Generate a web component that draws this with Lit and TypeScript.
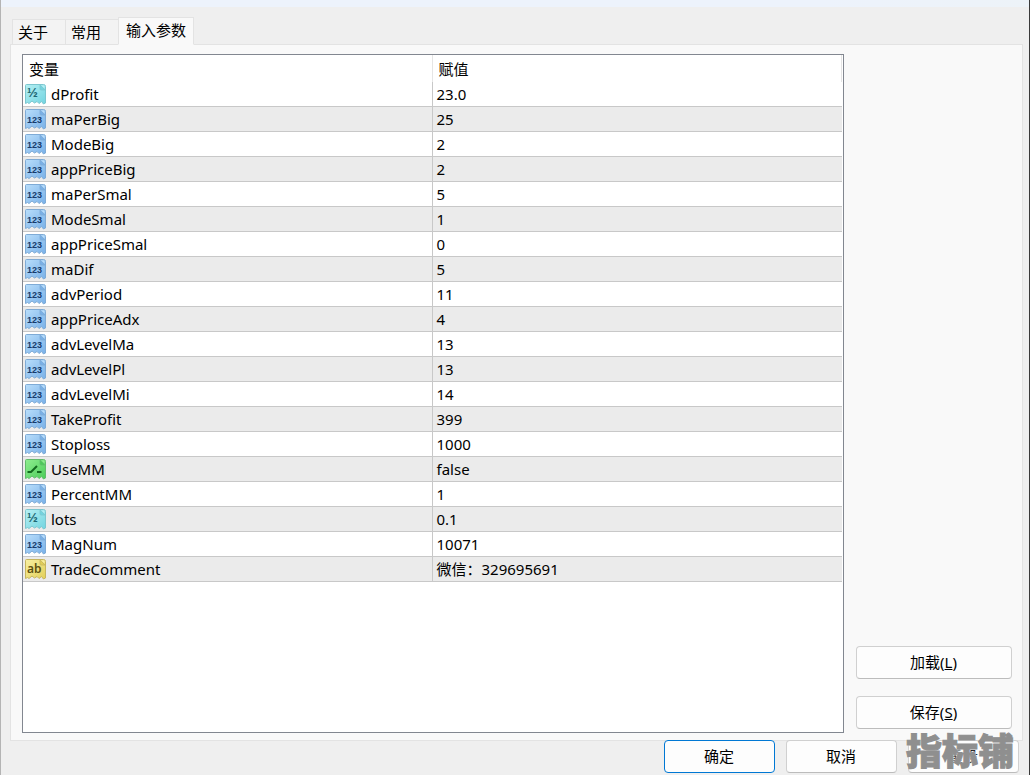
import { LitElement, html, css, svg } from "lit";
import { customElement, property, state } from "lit/decorators.js";

type Kind = "int" | "double" | "bool" | "string";

interface Param {
  kind: Kind;
  name: string;
  value: string;
}

const PARAMS: Param[] = [
  { kind: "double", name: "dProfit", value: "23.0" },
  { kind: "int", name: "maPerBig", value: "25" },
  { kind: "int", name: "ModeBig", value: "2" },
  { kind: "int", name: "appPriceBig", value: "2" },
  { kind: "int", name: "maPerSmal", value: "5" },
  { kind: "int", name: "ModeSmal", value: "1" },
  { kind: "int", name: "appPriceSmal", value: "0" },
  { kind: "int", name: "maDif", value: "5" },
  { kind: "int", name: "advPeriod", value: "11" },
  { kind: "int", name: "appPriceAdx", value: "4" },
  { kind: "int", name: "advLevelMa", value: "13" },
  { kind: "int", name: "advLevelPl", value: "13" },
  { kind: "int", name: "advLevelMi", value: "14" },
  { kind: "int", name: "TakeProfit", value: "399" },
  { kind: "int", name: "Stoploss", value: "1000" },
  { kind: "bool", name: "UseMM", value: "false" },
  { kind: "int", name: "PercentMM", value: "1" },
  { kind: "double", name: "lots", value: "0.1" },
  { kind: "int", name: "MagNum", value: "10071" },
  { kind: "string", name: "TradeComment", value: "微信：329695691" },
];

const PALETTE: Record<Kind, { light: string; dark: string; edge: string; ink: string }> = {
  int: { light: "#b9defb", dark: "#78b0e8", edge: "#7fabd6", ink: "#173c6c" },
  double: { light: "#b6f0f3", dark: "#72d4e0", edge: "#7cc6cf", ink: "#1f6874" },
  bool: { light: "#8fee90", dark: "#4acc58", edge: "#62bb6c", ink: "#126a1e" },
  string: { light: "#f8f0a2", dark: "#e2cf58", edge: "#c6b55e", ink: "#5c5010" },
};

@customElement("type-icon")
export class TypeIcon extends LitElement {
  static styles = css`
    :host { display: block; width: 21px; height: 21px; flex: none; }
    svg { display: block; }
    .word { font: 600 12px "Noto Sans", sans-serif; }
    .fraction { font: 600 13px "Liberation Sans", sans-serif; }
    .digits { font: 700 9px "Liberation Sans", sans-serif; }
  `;

  @property() kind: Kind = "int";

  private glyph(ink: string) {
    switch (this.kind) {
      case "double":
        return svg`<text class="fraction" x="2" y="13" fill=${ink}>½</text>`;
      case "bool":
        return svg`
          <path d="M2.500 13H6L12 7" fill="none" stroke=${ink} stroke-width="2" />
          <path d="M12 13H16.500" fill="none" stroke=${ink} stroke-width="2" />`;
      case "string":
        return svg`<text class="word" x="2" y="14" fill=${ink}>ab</text>`;
      default:
        return svg`<text class="digits" x="2" y="14" fill=${ink}>123</text>`;
    }
  }

  render() {
    const p = PALETTE[this.kind];
    return html`<svg width="21" height="21" viewBox="0 0 21 21" aria-hidden="true">
      <defs>
        <linearGradient id="g" x1="0" y1="0" x2="1" y2="1">
          <stop offset="0" stop-color=${p.light} />
          <stop offset="1" stop-color=${p.dark} />
        </linearGradient>
      </defs>
      <path
        d="M1.500.5H18.500Q20.500.5 20.500 2.500V19L18.500 20 16.500 17.500 14 19.500 12 17.500 9.500 19 7 17 4 19.500 2.500 18.500.5 19.500V1.500Q.5.5 1.500.5Z"
        fill="url(#g)" stroke=${p.edge} />
      <path d="M15 1V5Q15 6 16 6H20Z" fill=${p.dark} stroke=${p.edge} stroke-width=".8" />
      <path d="M16.500 1.500H19.500V4.500Z" fill=${p.light} />
      ${this.glyph(p.ink)}
    </svg>`;
  }
}

@customElement("app-root")
export class AppRoot extends LitElement {
  static styles = css`
    :host {
      display: block;
      font-family: "Noto Sans", "Noto Sans CJK SC", sans-serif;
      font-size: 15px;
      line-height: 20px;
      color: #000;
    }
    * { box-sizing: border-box; }
    button { font: inherit; color: inherit; }
    .dialog {
      display: flex;
      flex-direction: column;
      min-height: 100vh;
      background: #efefef;
      border-left: 1px solid #b4b4b4;
      border-right: 1px solid #3a3a3a;
    }
    .strip { height: 7px; background: linear-gradient(90deg, #edf3fc, #edf3fc 80%, #edf3f8); }
    .tabs {
      display: flex;
      align-items: flex-end;
      height: 38px;
      margin: 0 0 -1px 11px;
    }
    .tab {
      height: 26px;
      padding: 0 17px 0 5px;
      margin-right: -1px;
      background: #f3f3f3;
      border: 1px solid #e3e3e3;
      white-space: nowrap;
      text-align: left;
    }
    .tab.active {
      height: 28px;
      padding: 0 7px 2px;
      background: #f9f9f9;
      border-bottom-color: #f9f9f9;
      z-index: 1;
    }
    .panel {
      flex: 1;
      display: flex;
      gap: 12px;
      margin: 0 6px 0 9px;
      padding: 9px 10px 7px 11px;
      background: #f9f9f9;
      border: 1px solid #e3e3e3;
    }
    .list {
      flex: 1;
      padding-right: 1px;
      background: #fff;
      border: 1px solid #828790;
    }
    table { width: 100%; table-layout: fixed; border-collapse: separate; border-spacing: 0; }
    th, td { padding: 0; height: 25px; text-align: left; font-weight: normal; white-space: nowrap; }
    th { height: 27px; padding: 0 6px; border-right: 1px solid #e5e5e5; }
    td { border-bottom: 1px solid #c8c8c8; padding: 0 0 0 4px; }
    td:first-child { border-right: 1px solid #c8c8c8; padding: 0 0 0 2px; }
    tbody tr:nth-child(even) { background: #ebebeb; }
    .name { display: flex; align-items: center; gap: 5px; height: 24px; }
    .side {
      width: 156px;
      display: flex;
      flex-direction: column;
      justify-content: flex-end;
      gap: 17px;
      padding-bottom: 4px;
    }
    .btn {
      height: 33px;
      padding: 0 1px 2px 0;
      background: #fdfdfd;
      border: 1px solid #d0d0d0;
      border-bottom-color: #bcbcbc;
      border-radius: 4px;
    }
    .btn.primary { border-color: #0078d4; }
    .actions {
      position: relative;
      display: flex;
      justify-content: flex-end;
      gap: 11px;
      margin-top: -1px;
      padding: 0 10px 2px;
    }
    .actions .btn { width: 111px; }
    .mark {
      position: absolute;
      right: 15px;
      bottom: 6px;
      font: 900 36px/40px "Noto Sans CJK SC", sans-serif;
      color: #8f8f8f;
      -webkit-text-stroke: 1px #8f8f8f;
      text-shadow: 0 0 2px #fff, 0 0 2px #fff;
      pointer-events: none;
    }
  `;

  @state() private tab = 2;

  render() {
    return html`<main class="dialog">
      <div class="strip"></div>
      <div class="tabs" role="tablist">
        ${["关于", "常用", "输入参数"].map(
          (t, i) => html`<button
            class="tab ${i === this.tab ? "active" : ""}"
            role="tab"
            aria-selected=${i === this.tab ? "true" : "false"}
            @click=${() => (this.tab = i)}
          >${t}</button>`,
        )}
      </div>
      <section class="panel">
        <div class="list">
          <table>
            <thead><tr><th scope="col">变量</th><th scope="col">赋值</th></tr></thead>
            <tbody>
              ${PARAMS.map(
                (p) => html`<tr>
                  <td><div class="name"><type-icon .kind=${p.kind}></type-icon><span>${p.name}</span></div></td>
                  <td>${p.value}</td>
                </tr>`,
              )}
            </tbody>
          </table>
        </div>
        <div class="side">
          <button class="btn">加载(<u>L</u>)</button>
          <button class="btn">保存(<u>S</u>)</button>
        </div>
      </section>
      <footer class="actions">
        <button class="btn primary">确定</button>
        <button class="btn">取消</button>
        <button class="btn">重设</button>
        <span class="mark">指标铺</span>
      </footer>
    </main>`;
  }
}
